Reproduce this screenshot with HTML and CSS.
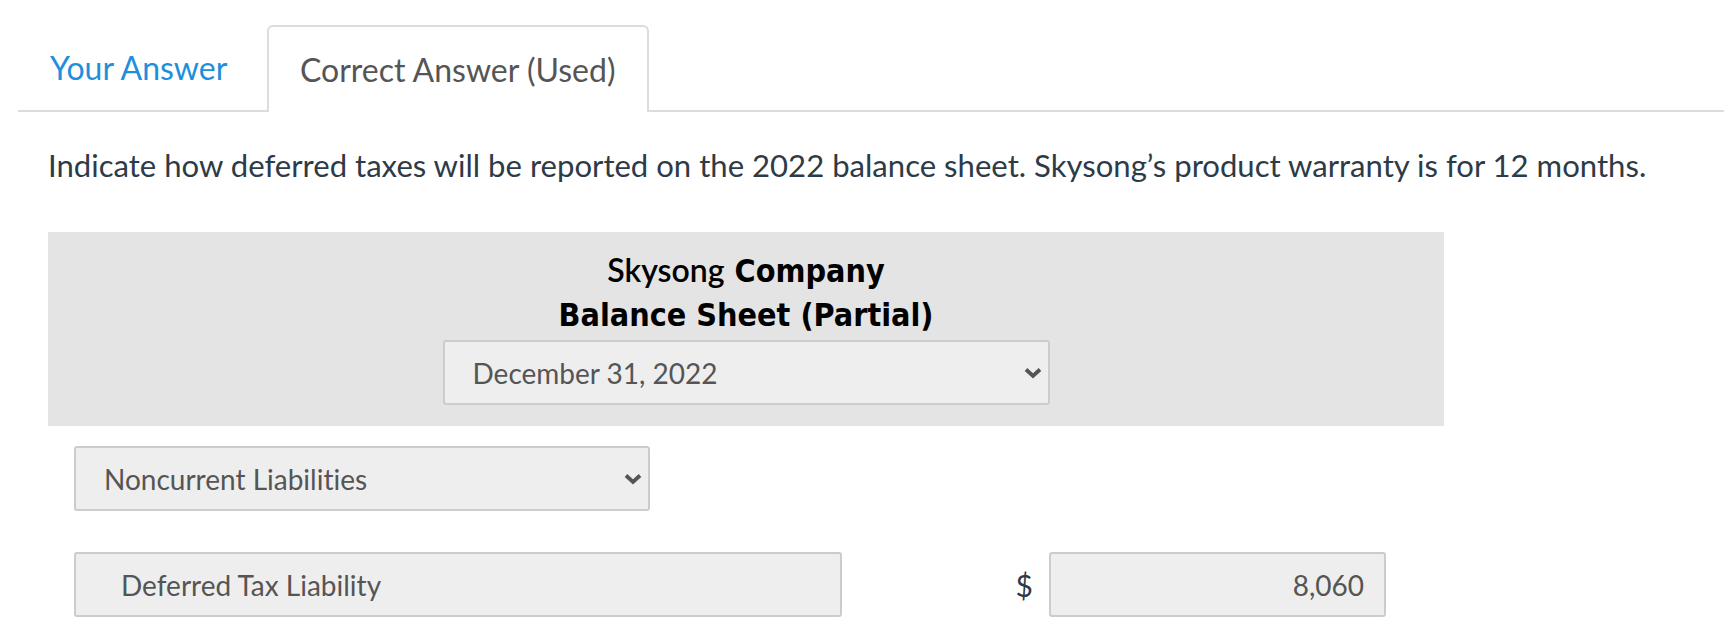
FILE: index.html
```html
<!DOCTYPE html>
<html>
<head>
<meta charset="utf-8">
<link rel="stylesheet" href="styles.css">
</head>
<body>
<div class="page">
  <div class="tabs">
    <div class="tab tab-link">Your Answer</div>
    <div class="tab tab-active">Correct Answer (Used)</div>
  </div>
  <div class="content">
    <p class="question">Indicate how deferred taxes will be reported on the 2022 balance sheet. Skysong’s product warranty is for 12 months.</p>
    <div class="sheet-head">
      <div class="title"><span class="co-name">Skysong</span> Company</div>
      <div class="title">Balance Sheet (Partial)</div>
      <div class="select select-date">
        <span>December 31, 2022</span>
        <svg class="chev" viewBox="0 0 18 12" width="18" height="12"><path d="M2 2.5 L9 9 L16 2.5" fill="none" stroke="#555" stroke-width="3.8"/></svg>
      </div>
    </div>
    <div class="row">
      <div class="select select-section">
        <span>Noncurrent Liabilities</span>
        <svg class="chev" viewBox="0 0 18 12" width="18" height="12"><path d="M2 2.5 L9 9 L16 2.5" fill="none" stroke="#555" stroke-width="3.8"/></svg>
      </div>
    </div>
    <div class="row line-row">
      <div class="field field-label">Deferred Tax Liability</div>
      <div class="dollar">$</div>
      <div class="field field-amount">8,060</div>
    </div>
  </div>
</div>
</body>
</html>
```

FILE: styles.css
```css
html, body {
  margin: 0;
  padding: 0;
  background: #fff;
  font-family: "Lato", "Liberation Sans", sans-serif;
  font-variant-ligatures: none;
}
.page {
  padding-top: 25px;
}
.tabs {
  display: flex;
  align-items: flex-end;
  margin-left: 18px;
  border-bottom: 2px solid #dcdcdc;
  height: 85px;
}
.tab {
  font-size: 32px;
  height: 85px;
  box-sizing: border-box;
  display: flex;
  align-items: center;
}
.tab-link {
  color: #1f8fdc;
  padding: 0 0 0 32px;
  width: 249px;
}
.tab-active {
  color: #555;
  border: 2px solid #dcdcdc;
  border-bottom: none;
  border-radius: 6px 6px 0 0;
  width: 382px;
  padding-left: 31px;
  margin-bottom: -2px;
  height: 87px;
  background: #fff;
}
.content {
  padding-left: 48px;
}
.question {
  margin: 0;
  padding-top: 35px;
  font-size: 31.1px;
  color: #2d3b48;
  line-height: 36px;
}
.sheet-head {
  margin-top: 49px;
  width: 1396px;
  height: 194px;
  background: #e4e4e4;
  display: flex;
  flex-direction: column;
  align-items: center;
  padding-top: 16px;
  box-sizing: border-box;
}
.title {
  font-family: "DejaVu Sans Condensed", "DejaVu Sans", sans-serif;
  font-stretch: condensed;
  font-weight: bold;
  font-size: 32px;
  line-height: 44px;
  color: #000;
}
.co-name {
  font-family: "Lato", sans-serif;
  font-stretch: normal;
  font-weight: 600;
}
.select, .field {
  box-sizing: border-box;
  background: #eeeeee;
  border: 2px solid #cccccc;
  border-radius: 3px;
  height: 65px;
  display: flex;
  align-items: center;
  font-size: 28px;
  color: #555;
}
.select {
  justify-content: space-between;
  padding: 0 6px 0 28px;
}
.select-date {
  width: 607px;
  margin-top: 3px;
}
.row {
  display: flex;
  align-items: center;
  padding-left: 26px;
}
.select-section {
  margin-top: 20px;
  width: 576px;
}
.line-row {
  margin-top: 41px;
}
.field-label {
  width: 768px;
  padding-left: 45px;
}
.dollar {
  width: 207px;
  text-align: right;
  padding-right: 16px;
  box-sizing: border-box;
  font-size: 30px;
  color: #2d3b48;
}
.field-amount {
  width: 337px;
  justify-content: flex-end;
  padding-right: 20px;
}
```
